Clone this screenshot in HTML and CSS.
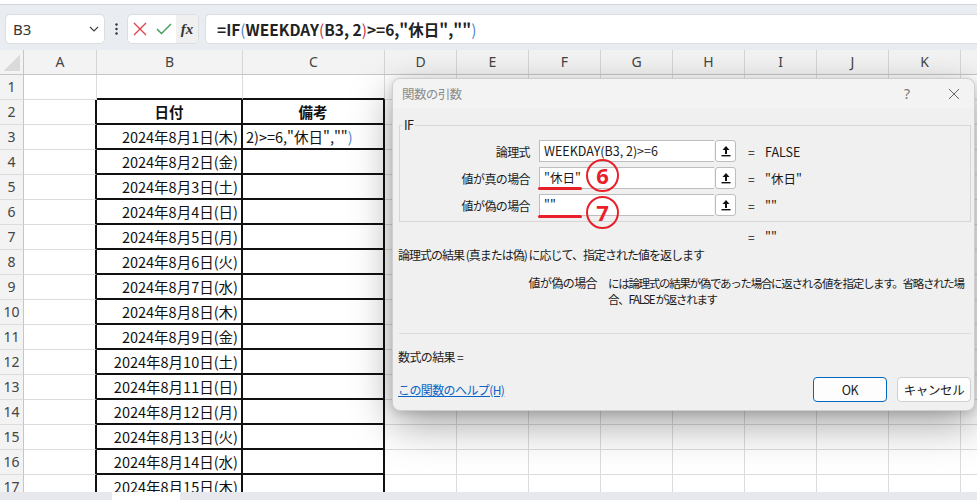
FILE: index.html
```html
<!DOCTYPE html>
<html lang="ja">
<head>
    <meta charset="UTF-8">
    <title>関数の引数</title>
    <link rel="stylesheet" href="styles.css">
</head>
<body>
<div class="app">
    <div class="ribbon-edge"></div>

    <!-- name box + formula bar -->
    <div class="formula-bar">
        <div class="name-box">
            <span>B3</span>
            <svg width="10" height="6" viewBox="0 0 10 6"><path d="M1 1l4 4 4-4" fill="none" stroke="#444" stroke-width="1.2"/></svg>
        </div>
        <div class="grip">
            <svg width="3" height="12" viewBox="0 0 3 12"><circle cx="1.5" cy="1.5" r="1.2" fill="#333"/><circle cx="1.5" cy="6" r="1.2" fill="#333"/><circle cx="1.5" cy="10.5" r="1.2" fill="#333"/></svg>
        </div>
        <div class="fx-buttons">
            <span class="fx-btn">
                <svg width="14" height="14" viewBox="0 0 14 14"><path d="M1 1l12 12M13 1L1 13" stroke="#e0454b" stroke-width="1.4"/></svg>
            </span>
            <span class="fx-btn">
                <svg width="16" height="12" viewBox="0 0 16 12"><path d="M1 6l4.5 4.5L15 1" fill="none" stroke="#3f9b52" stroke-width="1.4"/></svg>
            </span>
            <span class="fx-btn fx">fx</span>
        </div>
        <div class="formula-input">=IF<span class="p-blue">(</span>WEEKDAY<span class="p-red">(</span>B3, 2<span class="p-red">)</span>&gt;=6,"休日",""<span class="p-blue">)</span></div>
    </div>

    <!-- worksheet -->
    <div class="sheet">
        <div class="col-heads">
            <div class="corner"><i></i></div>
            <div class="ch w-a">A</div>
            <div class="ch w-b">B</div>
            <div class="ch w-c">C</div>
            <div class="ch">D</div>
            <div class="ch">E</div>
            <div class="ch">F</div>
            <div class="ch">G</div>
            <div class="ch">H</div>
            <div class="ch">I</div>
            <div class="ch">J</div>
            <div class="ch">K</div>
            <div class="ch"></div>
        </div>
        <div class="rows">
            <div class="cells">
                <div class="rh">1</div><div class="c"></div><div class="c top-edge"></div><div class="c top-edge"></div>
                <div class="rh">2</div><div class="c edge"></div><div class="c t hd">日付</div><div class="c t hd">備考</div>
                <div class="rh">3</div><div class="c edge"></div><div class="c t date">2024年8月1日(木)</div><div class="c t">2)&gt;=6,"休日",""<span class="p-blue">)</span></div>
                <div class="rh">4</div><div class="c edge"></div><div class="c t date">2024年8月2日(金)</div><div class="c t"></div>
                <div class="rh">5</div><div class="c edge"></div><div class="c t date">2024年8月3日(土)</div><div class="c t"></div>
                <div class="rh">6</div><div class="c edge"></div><div class="c t date">2024年8月4日(日)</div><div class="c t"></div>
                <div class="rh">7</div><div class="c edge"></div><div class="c t date">2024年8月5日(月)</div><div class="c t"></div>
                <div class="rh">8</div><div class="c edge"></div><div class="c t date">2024年8月6日(火)</div><div class="c t"></div>
                <div class="rh">9</div><div class="c edge"></div><div class="c t date">2024年8月7日(水)</div><div class="c t"></div>
                <div class="rh">10</div><div class="c edge"></div><div class="c t date">2024年8月8日(木)</div><div class="c t"></div>
                <div class="rh">11</div><div class="c edge"></div><div class="c t date">2024年8月9日(金)</div><div class="c t"></div>
                <div class="rh">12</div><div class="c edge"></div><div class="c t date">2024年8月10日(土)</div><div class="c t"></div>
                <div class="rh">13</div><div class="c edge"></div><div class="c t date">2024年8月11日(日)</div><div class="c t"></div>
                <div class="rh">14</div><div class="c edge"></div><div class="c t date">2024年8月12日(月)</div><div class="c t"></div>
                <div class="rh">15</div><div class="c edge"></div><div class="c t date">2024年8月13日(火)</div><div class="c t"></div>
                <div class="rh">16</div><div class="c edge"></div><div class="c t date">2024年8月14日(水)</div><div class="c t"></div>
                <div class="rh">17</div><div class="c edge"></div><div class="c t date">2024年8月15日(木)</div><div class="c t"></div>
            </div>
            <div class="empty-cols"></div>
        </div>
    </div>

    <div class="tabs"><span class="tab"></span></div>

    <!-- function arguments dialog -->
    <div class="dialog">
        <div class="dlg-title">
            <span class="dlg-name">関数の引数</span>
            <span class="dlg-help">?</span>
            <span class="dlg-close">
                <svg width="12" height="12" viewBox="0 0 12 12"><path d="M1 1l10 10M11 1L1 11" stroke="#666" stroke-width="1"/></svg>
            </span>
        </div>

        <fieldset class="args">
            <legend>IF</legend>
            <div class="arg">
                <span class="arg-label">論理式</span>
                <span class="arg-input">WEEKDAY(B3, 2)&gt;=6</span>
                <span class="ref-btn"><svg width="10" height="12" viewBox="0 0 10 12"><path d="M5 1L1.5 5h2.5v4h2V5h2.5z" fill="#111"/><rect x="0.5" y="10" width="9" height="1.4" fill="#111"/></svg></span>
                <span class="eq">=</span>
                <span class="val">FALSE</span>
            </div>
            <div class="arg">
                <span class="arg-label">値が真の場合</span>
                <span class="arg-input">"休日"</span>
                <span class="ref-btn"><svg width="10" height="12" viewBox="0 0 10 12"><path d="M5 1L1.5 5h2.5v4h2V5h2.5z" fill="#111"/><rect x="0.5" y="10" width="9" height="1.4" fill="#111"/></svg></span>
                <span class="eq">=</span>
                <span class="val">"休日"</span>
            </div>
            <div class="arg">
                <span class="arg-label">値が偽の場合</span>
                <span class="arg-input">""</span>
                <span class="ref-btn"><svg width="10" height="12" viewBox="0 0 10 12"><path d="M5 1L1.5 5h2.5v4h2V5h2.5z" fill="#111"/><rect x="0.5" y="10" width="9" height="1.4" fill="#111"/></svg></span>
                <span class="eq">=</span>
                <span class="val">""</span>
            </div>
        </fieldset>

        <div class="arg result">
            <span class="arg-label"></span>
            <span class="eq">=</span>
            <span class="val">""</span>
        </div>

        <p class="fn-desc">論理式の結果 (真または偽) に応じて、指定された値を返します</p>

        <div class="arg-help">
            <span class="ah-name">値が偽の場合</span>
            <span class="ah-text">には論理式の結果が偽であった場合に返される値を指定します。省略された場<br>合、FALSE が返されます</span>
        </div>

        <div class="dlg-rule"></div>

        <p class="formula-result">数式の結果 =</p>

        <div class="dlg-foot">
            <a href="#" class="help-link">この関数のヘルプ(H)</a>
            <button class="btn ok">OK</button>
            <button class="btn">キャンセル</button>
        </div>

        <!-- red callouts -->
        <span class="mark-line l6"></span>
        <span class="mark-line l7"></span>
        <span class="mark-num n6">6</span>
        <span class="mark-num n7">7</span>
    </div>
</div>
</body>
</html>
```

FILE: styles.css
```css
body {
margin:0;
padding:0;
background:#fff;
font-family:"Noto Sans CJK JP", "Noto Sans", sans-serif;
color:#1a1a1a;
overflow:hidden;
}

.app {
position:relative;
width:977px;
height:500px;
overflow:hidden;
}

/* top area */
.ribbon-edge {
height:4px;
background:#fff;
border-bottom:1px solid #d3d6db;
}
.formula-bar {
height:45px;
box-sizing:border-box;
padding:9px 0 0 5px;
display:flex;
align-items:flex-start;
background:#e9ecf0;
}
.name-box {
width:100px;
height:30px;
box-sizing:border-box;
background:#fff;
border:1px solid #dcdde0;
border-radius:5px;
display:flex;
align-items:center;
justify-content:space-between;
padding:0 5px 0 7px;
font:15px "Noto Sans", sans-serif;
color:#333;
}
.grip {
width:22px;
height:30px;
display:flex;
align-items:center;
justify-content:center;
}
.fx-buttons {
width:72px;
height:30px;
box-sizing:border-box;
background:#fff;
border:1px solid #dcdde0;
border-radius:5px;
display:flex;
overflow:hidden;
}
.fx-btn {
width:24px;
display:flex;
align-items:center;
justify-content:center;
}
.fx-btn.fx {
width:22px;
background:#f0f0f0;
font:italic bold 15px "Liberation Serif", serif;
color:#333;
}
.formula-input {
flex:1;
margin-left:6px;
height:30px;
box-sizing:border-box;
background:#fff;
border:1px solid #dcdde0;
border-right:0;
border-radius:5px 0 0 5px;
padding-left:11px;
font-weight:bold;
font-size:15.5px;
line-height:28px;
color:#222;
white-space:nowrap;
}
.p-blue { color:#4f86c6; font-weight:normal; }
.p-red { color:#c9304a; font-weight:normal; }

/* column headers */
.sheet {
height:442px;
overflow:hidden;
}
.col-heads {
display:flex;
height:25px;
background:#f3f3f3;
border-bottom:1px solid #c6c6c6;
box-sizing:border-box;
font:14px "Noto Sans", sans-serif;
color:#444;
}
.corner {
width:24px;
flex:none;
box-sizing:border-box;
border-right:1px solid #c6c6c6;
display:flex;
align-items:flex-end;
justify-content:flex-end;
padding:0 3px 3px 0;
}
.corner i {
width:17px;
height:17px;
background:linear-gradient(to top left, #dadada 50%, transparent 50%);
}
.ch {
width:72px;
flex:none;
box-sizing:border-box;
border-right:1px solid #d6d6d6;
text-align:center;
line-height:24px;
}
.ch.w-a { width:73px; }
.ch.w-b { width:146px; }
.ch.w-c { width:142px; }

/* cells */
.rows {
display:flex;
}
.cells {
display:grid;
grid-template-columns:24px 73px 146px 142px;
grid-auto-rows:25px;
flex:none;
}
.rh {
box-sizing:border-box;
background:#f3f3f3;
border-right:1px solid #c6c6c6;
border-bottom:1px solid #dcdcdc;
font:14px "Noto Sans", sans-serif;
color:#444;
text-align:center;
line-height:24px;
}
.c {
box-sizing:border-box;
border-right:1px solid #dcdcdc;
border-bottom:1px solid #dcdcdc;
padding:0 3px;
font-size:14.5px;
line-height:23px;
white-space:nowrap;
overflow:hidden;
color:#111;
}
.c.edge { border-right:2px solid #111; }
.c.top-edge { border-bottom:2px solid #111; }
.c.t {
border-right:2px solid #111;
border-bottom:2px solid #111;
}
.c.hd {
font-weight:bold;
text-align:center;
}
.c.date { text-align:right; }

.empty-cols {
flex:1;
height:417px;
background-image:
    linear-gradient(to right, transparent 71px, #dcdcdc 71px),
    linear-gradient(to bottom, transparent 24px, #dcdcdc 24px);
background-size:72px 25px, 100% 25px;
}

/* sheet tab strip */
.tabs {
height:8px;
background:#e6e8ed;
padding-left:112px;
}
.tab {
display:block;
width:68px;
height:8px;
background:#fff;
}

/* dialog */
.dialog {
position:absolute;
left:392px;
top:78px;
width:583px;
height:333px;
box-sizing:border-box;
background:#f0f0f0;
border:1px solid #cfcfcf;
border-radius:8px;
box-shadow:0 14px 42px rgba(0,0,0,0.36), 0 2px 8px rgba(0,0,0,0.14);
font-size:12px;
letter-spacing:-0.6px;
}
.dlg-title {
height:29px;
display:flex;
align-items:center;
padding-left:9px;
background:#f3f3f3;
border-radius:8px 8px 0 0;
}
.dlg-name {
flex:1;
font-size:12.5px;
color:#8a8a8a;
}
.dlg-help {
width:44px;
font:14px "Noto Sans", sans-serif;
color:#777;
}
.dlg-close {
width:26px;
display:flex;
}

/* argument group */
.args {
margin:9px 3px 0 6px;
padding:7px 0 5px 0;
border:1px solid #d6d6d6;
}
.args legend {
margin-left:2px;
padding:0 2px;
font-size:12.5px;
line-height:16px;
}
.arg {
display:flex;
align-items:center;
height:22px;
margin-bottom:5px;
}
.arg:last-child { margin-bottom:0; }
.arg-label {
width:139px;
box-sizing:border-box;
padding-right:9px;
text-align:right;
}
.arg-input {
width:175px;
height:22px;
box-sizing:border-box;
background:#fff;
border:1px solid #bdbdbd;
border-right:0;
padding-left:4px;
line-height:20px;
font-size:12.5px;
letter-spacing:0;
}
.ref-btn {
width:21px;
height:22px;
box-sizing:border-box;
background:#fff;
border:1px solid #bdbdbd;
border-radius:3px;
display:flex;
align-items:center;
justify-content:center;
margin-left:1px;
}
.eq {
width:18px;
text-align:right;
}
.val {
margin-left:11px;
font-size:12.5px;
letter-spacing:0;
}
.arg.result {
margin:6px 0 0 7px;
height:16px;
}
.arg.result .arg-label { width:336px; }

.fn-desc {
margin:3px 0 0 5px;
font-size:12px;
line-height:16px;
letter-spacing:-1px;
}
.arg-help {
display:flex;
margin-top:12px;
line-height:16px;
}
.ah-name {
width:204px;
text-align:right;
flex:none;
}
.ah-text {
margin-left:11px;
white-space:nowrap;
font-size:11.5px;
letter-spacing:-1.3px;
}
.dlg-rule {
margin:26px 3px 0 6px;
border-top:1px solid #dcdcdc;
}
.formula-result {
margin:15px 0 0 5px;
line-height:16px;
}
.dlg-foot {
display:flex;
align-items:center;
margin:12px 0 0 5px;
}
.help-link {
flex:1;
color:#0a63c9;
font-size:12px;
}
.btn {
width:74px;
height:25px;
margin-left:10px;
background:#fdfdfd;
border:1px solid #d0d0d0;
border-radius:4px;
font-family:"Noto Sans CJK JP", sans-serif;
font-size:12.5px;
letter-spacing:-0.4px;
color:#1a1a1a;
padding:0;
}
.btn.ok {
border:1px solid #0067c0;
}
.btn:last-child { margin-right:3px; }

/* red callouts */
.mark-line {
position:absolute;
left:145px;
width:44px;
height:3px;
border-radius:2px;
background:#e8202a;
}
.mark-line.l6 { top:108px; }
.mark-line.l7 { top:136px; }
.mark-num {
position:absolute;
left:193px;
width:33px;
height:33px;
box-sizing:border-box;
border:2.5px solid #e8202a;
border-radius:50%;
color:#e8202a;
font:bold 22px/28px "Noto Sans", sans-serif;
text-align:center;
letter-spacing:0;
}
.mark-num.n6 { top:80px; }
.mark-num.n7 { top:117px; }
```
